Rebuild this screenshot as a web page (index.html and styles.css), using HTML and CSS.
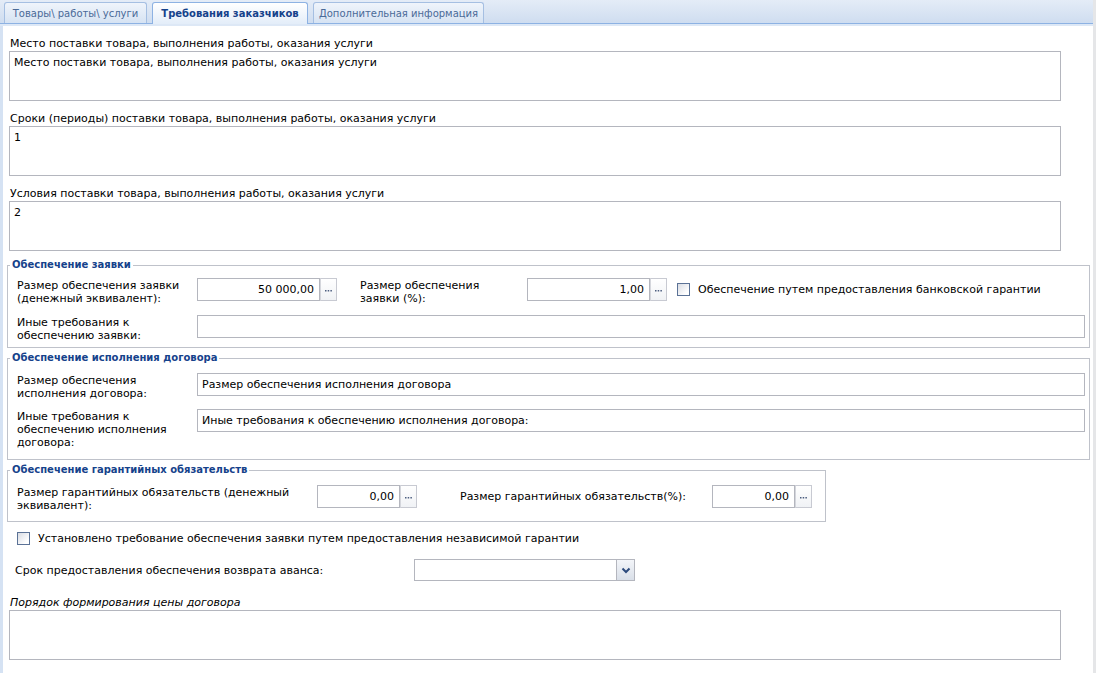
FILE: index.html
```html
<!DOCTYPE html>
<html lang="ru">
<head>
<meta charset="utf-8">
<title>Требования заказчиков</title>
<link rel="stylesheet" href="styles.css">
</head>
<body>
<div class="window">
  <div class="tabbar">
    <div class="tab tab-goods">Товары\ работы\ услуги</div>
    <div class="tab tab-active">Требования заказчиков</div>
    <div class="tab tab-extra">Дополнительная информация</div>
  </div>
  <div class="tab-spacer"></div>
  <div class="form">
    <div class="field">
      <div class="flabel">Место поставки товара, выполнения работы, оказания услуги</div>
      <div class="tarea">Место поставки товара, выполнения работы, оказания услуги</div>
    </div>
    <div class="field">
      <div class="flabel">Сроки (периоды) поставки товара, выполнения работы, оказания услуги</div>
      <div class="tarea">1</div>
    </div>
    <div class="field">
      <div class="flabel">Условия поставки товара, выполнения работы, оказания услуги</div>
      <div class="tarea">2</div>
    </div>

    <fieldset class="group group-bid">
      <legend class="group-title">Обеспечение заявки</legend>
      <div class="row">
        <div class="lbl">Размер обеспечения заявки<br>(денежный эквивалент):</div>
        <div class="input num w-bid">50 000,00</div>
        <div class="trig"><svg width="7" height="2" viewBox="0 0 7 2"><rect x="0" y="0" width="1.5" height="1.5" fill="#4d5f80"/><rect x="2.7" y="0" width="1.5" height="1.5" fill="#4d5f80"/><rect x="5.4" y="0" width="1.5" height="1.5" fill="#4d5f80"/></svg></div>
        <div class="lbl lbl-pct">Размер обеспечения<br>заявки (%):</div>
        <div class="input num w-bid">1,00</div>
        <div class="trig"><svg width="7" height="2" viewBox="0 0 7 2"><rect x="0" y="0" width="1.5" height="1.5" fill="#4d5f80"/><rect x="2.7" y="0" width="1.5" height="1.5" fill="#4d5f80"/><rect x="5.4" y="0" width="1.5" height="1.5" fill="#4d5f80"/></svg></div>
        <div class="check check-bank">
          <div class="cb"></div>
          <span>Обеспечение путем предоставления банковской гарантии</span>
        </div>
      </div>
      <div class="row row-next">
        <div class="lbl">Иные требования к<br>обеспечению заявки:</div>
        <div class="input wide"></div>
      </div>
    </fieldset>

    <fieldset class="group group-contract">
      <legend class="group-title">Обеспечение исполнения договора</legend>
      <div class="row">
        <div class="lbl">Размер обеспечения<br>исполнения договора:</div>
        <div class="input wide">Размер обеспечения исполнения договора</div>
      </div>
      <div class="row row-next2">
        <div class="lbl">Иные требования к<br>обеспечению исполнения<br>договора:</div>
        <div class="input wide">Иные требования к обеспечению исполнения договора:</div>
      </div>
    </fieldset>

    <fieldset class="group group-warranty">
      <legend class="group-title">Обеспечение гарантийных обязательств</legend>
      <div class="row">
        <div class="lbl lbl-warranty">Размер гарантийных обязательств (денежный<br>эквивалент):</div>
        <div class="input num w-war">0,00</div>
        <div class="trig"><svg width="7" height="2" viewBox="0 0 7 2"><rect x="0" y="0" width="1.5" height="1.5" fill="#4d5f80"/><rect x="2.7" y="0" width="1.5" height="1.5" fill="#4d5f80"/><rect x="5.4" y="0" width="1.5" height="1.5" fill="#4d5f80"/></svg></div>
        <div class="lbl lbl-warpct">Размер гарантийных обязательств(%):</div>
        <div class="input num w-war">0,00</div>
        <div class="trig"><svg width="7" height="2" viewBox="0 0 7 2"><rect x="0" y="0" width="1.5" height="1.5" fill="#4d5f80"/><rect x="2.7" y="0" width="1.5" height="1.5" fill="#4d5f80"/><rect x="5.4" y="0" width="1.5" height="1.5" fill="#4d5f80"/></svg></div>
      </div>
    </fieldset>

    <div class="check checkrow">
      <div class="cb"></div>
      <span>Установлено требование обеспечения заявки путем предоставления независимой гарантии</span>
    </div>

    <div class="comborow">
      <div class="combo-label">Срок предоставления обеспечения возврата аванса:</div>
      <div class="combo">
        <div class="combo-input"></div>
        <div class="combo-trig"><svg width="10" height="7" viewBox="0 0 10 7"><path d="M1.5 1.5 L5 5 L8.5 1.5" fill="none" stroke="#2c4a7c" stroke-width="2"/></svg></div>
      </div>
    </div>

    <div class="field field-last">
      <div class="flabel italic">Порядок формирования цены договора</div>
      <div class="tarea"></div>
    </div>
  </div>
</div>
</body>
</html>
```

FILE: styles.css
```css
html, body {
  margin: 0;
  padding: 0;
  background: #ffffff;
}

body {
  font-family: "DejaVu Sans", "Noto Sans", sans-serif;
  font-size: 11px;
  line-height: 13px;
  color: #000000;
}

.window {
  width: 1096px;
  height: 673px;
  box-sizing: border-box;
  border-right: 3px solid #e5e6e8;
  overflow: hidden;
}

/* ---------- tabs ---------- */
.tabbar {
  height: 24px;
  box-sizing: border-box;
  display: flex;
  align-items: flex-end;
  gap: 5px;
  padding-left: 4px;
  background: linear-gradient(#e4ecf7, #cfddf0);
  border-bottom: 1px solid #8db2e3;
}

.tab {
  height: 21px;
  box-sizing: border-box;
  border: 1px solid #a5bfe2;
  border-bottom: 0;
  border-radius: 3px 3px 0 0;
  background: linear-gradient(#eff4fb, #d6e3f3);
  color: #4a6a98;
  font-size: 10px;
  text-align: center;
  line-height: 21px;
  white-space: nowrap;
}

.tab-goods { width: 143px; }
.tab-extra { width: 171px; }

.tab-active {
  width: 156px;
  height: 22px;
  margin-bottom: -1px;
  border-color: #8db2e3;
  background: linear-gradient(#ffffff, #e3edf9);
  color: #15428b;
  font-weight: bold;
}

.tab-spacer {
  height: 2px;
  background: #dde8f6;
}

/* ---------- form ---------- */
.form {
  border-left: 3px solid #d5e2f3;
  padding: 11px 0 0 4px;
  height: 650px;
  box-sizing: border-box;
}

.field + .field {
  margin-top: 11px;
}

.flabel {
  margin-left: 2px;
  line-height: 14px;
  padding-left: 1px;
}

.italic {
  font-style: italic;
}

.tarea {
  margin-left: 2px;
  width: 1052px;
  height: 50px;
  box-sizing: border-box;
  border: 1px solid #b4b6be;
  padding: 4px 4px;
  background: #ffffff;
}

/* ---------- groups ---------- */
.group {
  margin: 7px 0 0 0;
  min-width: 0;
  border: 1px solid #bfc2ca;
  padding: 6px 4px 5px 8px;
  box-sizing: border-box;
  width: 1083px;
}

.group-contract {
  margin-top: 3px;
  padding-top: 8px;
  padding-bottom: 10px;
}

.group-warranty {
  margin-top: 3px;
  width: 819px;
  padding-top: 8px;
  padding-bottom: 9px;
}

.group-title {
  margin-left: -6px;
  padding: 0 2px;
  font-size: 10px;
  line-height: 14px;
  font-weight: bold;
  color: #15428b;
}

.row {
  display: flex;
  align-items: flex-start;
}

.row-next { margin-top: 10px; }
.row-next2 { margin-top: 9px; }

.lbl {
  width: 181px;
  flex: none;
  padding: 1px 0 0 1px;
  box-sizing: border-box;
}

.lbl-pct {
  width: 168px;
  margin-left: 22px;
}

.lbl-warranty {
  width: 301px;
}

.lbl-warpct {
  width: 253px;
  margin-left: 42px;
  padding-top: 0;
  line-height: 23px;
}

.input {
  height: 23px;
  box-sizing: border-box;
  border: 1px solid #b4b6be;
  background: #ffffff;
  padding: 0 4px;
  line-height: 21px;
  white-space: nowrap;
  overflow: hidden;
}

.num {
  text-align: right;
  padding-right: 5px;
}

.w-bid { width: 123px; flex: none; }
.w-war { width: 83px; flex: none; }

.wide { flex: 1; }

.trig {
  width: 17px;
  height: 23px;
  flex: none;
  box-sizing: border-box;
  border: 1px solid #c8cad2;
  border-left: 1px solid #d4d6dc;
  background: linear-gradient(#ffffff, #f0f2f5);
  display: flex;
  align-items: center;
  justify-content: center;
  padding-top: 2px;
}

/* ---------- checkboxes ---------- */
.check {
  display: flex;
  align-items: center;
  gap: 8px;
}

.check-bank {
  height: 23px;
  margin-left: 10px;
}

.cb {
  width: 13px;
  height: 13px;
  flex: none;
  box-sizing: border-box;
  border: 1px solid #5b7296;
  background: linear-gradient(135deg, #d9dce3, #ffffff 80%);
}

.checkrow {
  margin: 10px 0 0 10px;
  height: 13px;
}

/* ---------- combo ---------- */
.comborow {
  margin-top: 14px;
  display: flex;
  align-items: center;
}

.combo-label {
  margin-left: 8px;
  width: 399px;
  flex: none;
}

.combo {
  display: flex;
  height: 22px;
}

.combo-input {
  width: 203px;
  box-sizing: border-box;
  border: 1px solid #b4b6be;
  background: #ffffff;
}

.combo-trig {
  width: 18px;
  box-sizing: border-box;
  border: 1px solid #b4b6be;
  border-left: 0;
  background: linear-gradient(#f3f5f9, #d9dfe8);
  display: flex;
  align-items: center;
  justify-content: center;
}

.field-last {
  margin-top: 15px;
}
```
